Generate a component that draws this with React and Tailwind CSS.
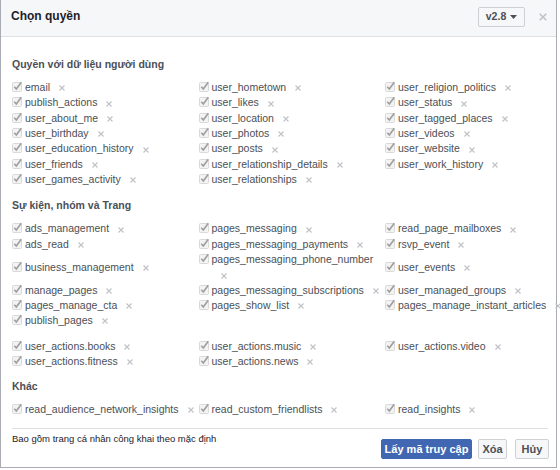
import React from "react";

function Check() {
  return (
    <svg width="11" height="11" viewBox="0 0 11 11" className="shrink-0 mt-[1px] mr-[2px]">
      <rect x="0.5" y="1.5" width="9" height="9" rx="1" fill="#f3f3f3" stroke="#d9d9d9" />
      <path d="M2.3 5.8 L4.3 8 L9.3 1.3" fill="none" stroke="#9d9d9d" strokeWidth="1.6" />
    </svg>
  );
}

function X() {
  return (
    <svg width="6" height="6" viewBox="0 0 6 6" className="inline-block ml-[9px] align-middle">
      <path d="M0.5 0.5L5.5 5.5M5.5 0.5L0.5 5.5" stroke="#bfc3c8" strokeWidth="1.2" />
    </svg>
  );
}

function Item({ label, wrap }) {
  if (!label) return <div />;
  return (
    <div className="flex items-start">
      <Check />
      <span className="whitespace-nowrap">
        {label}
        {wrap ? <br /> : null}
        <X />
      </span>
    </div>
  );
}

function Grid({ rows }) {
  return (
    <div className="grid grid-cols-[186.5px_186.5px_186.5px] items-center leading-[15.33px] text-[10.5px] text-[#4b4f56]">
      {rows.flat().map((it, i) =>
        typeof it === "object" && it ? (
          <Item key={i} label={it.l} wrap={it.wrap} />
        ) : (
          <Item key={i} label={it} />
        )
      )}
    </div>
  );
}

function Heading({ children, className = "" }) {
  return (
    <div className={"text-[10.5px] leading-[16px] font-bold text-[#4b4f56] mb-[8px] " + className}>
      {children}
    </div>
  );
}

const g1 = [
  ["email", "user_hometown", "user_religion_politics"],
  ["publish_actions", "user_likes", "user_status"],
  ["user_about_me", "user_location", "user_tagged_places"],
  ["user_birthday", "user_photos", "user_videos"],
  ["user_education_history", "user_posts", "user_website"],
  ["user_friends", "user_relationship_details", "user_work_history"],
  ["user_games_activity", "user_relationships", null],
];

const g2 = [
  ["ads_management", "pages_messaging", "read_page_mailboxes"],
  ["ads_read", "pages_messaging_payments", "rsvp_event"],
  ["business_management", { l: "pages_messaging_phone_number", wrap: true }, "user_events"],
  ["manage_pages", "pages_messaging_subscriptions", "user_managed_groups"],
  ["pages_manage_cta", "pages_show_list", "pages_manage_instant_articles"],
  ["publish_pages", null, null],
];

const g3 = [
  ["user_actions.books", "user_actions.music", "user_actions.video"],
  ["user_actions.fitness", "user_actions.news", null],
];

const g4 = [["read_audience_network_insights", "read_custom_friendlists", "read_insights"]];

export default function App() {
  return (
    <div className="w-[560px] h-[470px] bg-white font-['Liberation_Sans',Arial,sans-serif]">
      <div className="w-[557px] border-x border-b border-[#a9adb3] bg-white">
        <div className="h-[37px] bg-[#f6f7f9] border-b border-[#dddfe2] flex items-start pl-[10px] pr-[9px]">
          <div className="mt-[8px] text-[12px] leading-[16px] font-bold text-[#1d2129]">Chọn quyền</div>
          <div className="ml-auto mt-[7px] h-[20px] w-[47px] border border-[#ccd0d5] bg-[#f6f7f9] rounded-[2px] flex items-center justify-center text-[10.5px] font-bold text-[#4b4f56]">
            v2.8
            <svg width="7" height="4" viewBox="0 0 7 4" className="ml-[4px]">
              <path d="M0 0H7L3.5 4Z" fill="#4b4f56" />
            </svg>
          </div>
          <svg width="8" height="8" viewBox="0 0 8 8" className="ml-[14px] mt-[13px]">
            <path d="M0.7 0.7L7.3 7.3M7.3 0.7L0.7 7.3" stroke="#bec2c9" strokeWidth="1.6" />
          </svg>
        </div>
        <div className="pl-[11px] pt-[19px] pb-[8px]">
          <Heading>Quyền với dữ liệu người dùng</Heading>
          <Grid rows={g1} />
          <Heading className="mt-[10px]">Sự kiện, nhóm và Trang</Heading>
          <Grid rows={g2} />
          <div className="mt-[10px]">
            <Grid rows={g3} />
          </div>
          <Heading className="mt-[9px]">Khác</Heading>
          <Grid rows={g4} />
          <div className="mt-[10px] mr-[8px] border-t border-[#dddfe2]" />
          <div className="flex items-start pr-[7px]">
            <div className="mt-[4px] text-[9.5px] leading-[12px] text-[#1d2129]">
              Bao gồm trang cá nhân công khai theo mặc định
            </div>
            <div className="ml-auto mt-[10px] flex">
              <button className="h-[20px] w-[91px] bg-[#4267b2] border border-[#4267b2] rounded-[2px] text-white text-[11px] font-bold leading-[18px]">
                Lấy mã truy cập
              </button>
              <button className="ml-[6px] h-[20px] w-[29px] bg-[#f6f7f9] border border-[#ced0d4] rounded-[2px] text-[#4b4f56] text-[11px] font-bold leading-[18px]">
                Xóa
              </button>
              <button className="ml-[8px] h-[20px] w-[34px] bg-[#f6f7f9] border border-[#ced0d4] rounded-[2px] text-[#4b4f56] text-[11px] font-bold leading-[18px]">
                Hủy
              </button>
            </div>
          </div>
        </div>
      </div>
    </div>
  );
}
